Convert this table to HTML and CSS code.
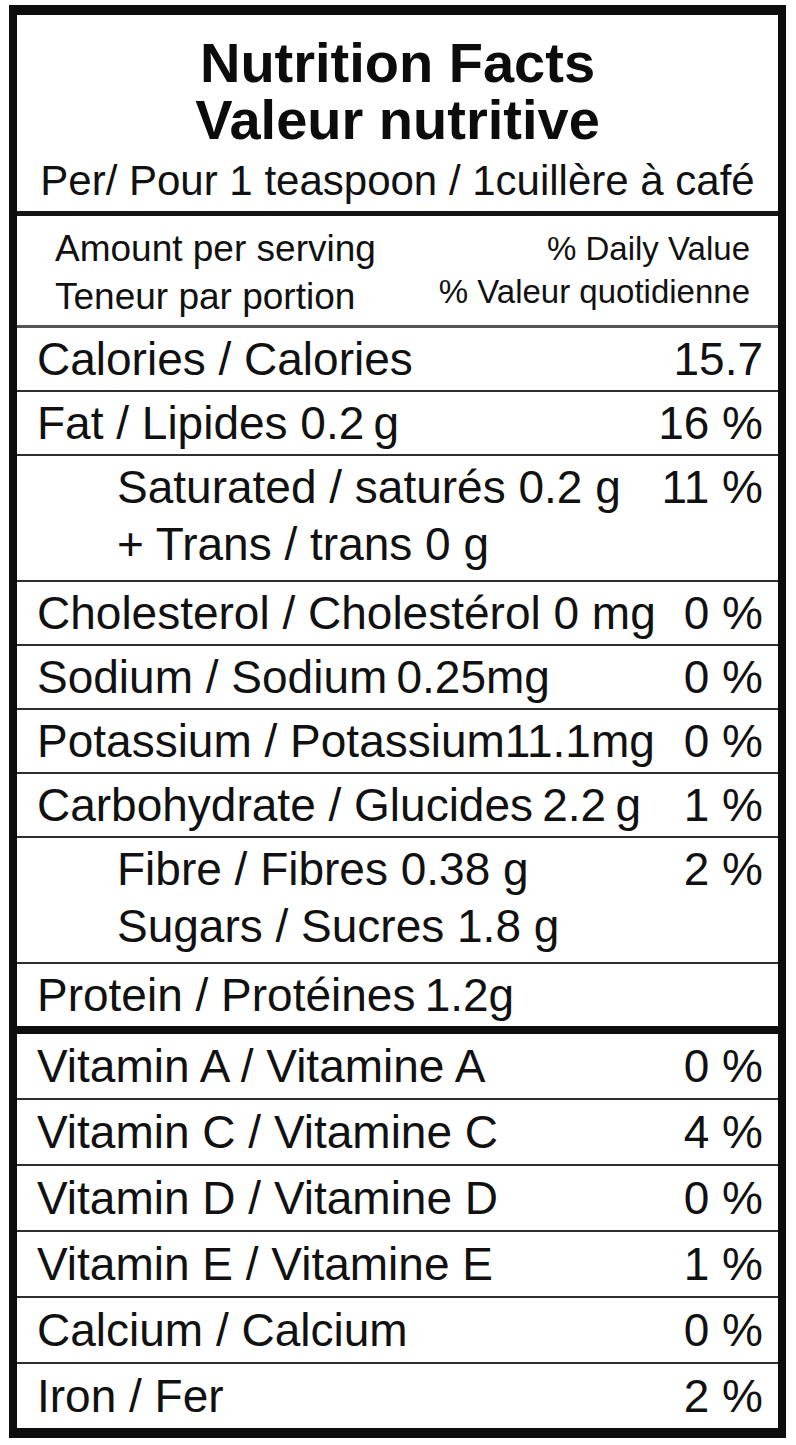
FILE: index.html
```html
<!DOCTYPE html>
<html lang="en">
<head>
<meta charset="utf-8">
<title>Nutrition Facts</title>
<link rel="stylesheet" href="styles.css">
</head>
<body>
<div class="label">
  <header class="head">
    <h1 class="title">Nutrition Facts<br>Valeur nutritive</h1>
    <p class="serving">Per/ Pour 1 teaspoon / 1cuillère à café</p>
  </header>
  <div class="amount">
    <div class="amount-left">Amount per serving<br>Teneur par portion</div>
    <div class="amount-right">% Daily Value<br>% Valeur quotidienne</div>
  </div>
  <div class="row"><span class="name">Calories / Calories</span><span class="val">15.7</span></div>
  <div class="row"><span class="name">Fat / Lipides 0.2&thinsp;g</span><span class="val">16 %</span></div>
  <div class="row double sub"><span class="name">Saturated / saturés 0.2 g<br>+ Trans / trans 0 g</span><span class="val">11 %</span></div>
  <div class="row"><span class="name">Cholesterol / Cholestérol 0 mg</span><span class="val">0 %</span></div>
  <div class="row"><span class="name">Sodium / Sodium&thinsp;0.25mg</span><span class="val">0 %</span></div>
  <div class="row"><span class="name">Potassium / Potassium11.1mg</span><span class="val">0 %</span></div>
  <div class="row"><span class="name">Carbohydrate / Glucides&thinsp;2.2&thinsp;g</span><span class="val">1 %</span></div>
  <div class="row double sub"><span class="name">Fibre / Fibres 0.38 g<br>Sugars / Sucres 1.8 g</span><span class="val">2 %</span></div>
  <div class="row thick"><span class="name">Protein / Protéines&thinsp;1.2g</span><span class="val"></span></div>
  <div class="row vit"><span class="name">Vitamin A / Vitamine A</span><span class="val">0 %</span></div>
  <div class="row vit"><span class="name">Vitamin C / Vitamine C</span><span class="val">4 %</span></div>
  <div class="row vit"><span class="name">Vitamin D / Vitamine D</span><span class="val">0 %</span></div>
  <div class="row vit"><span class="name">Vitamin E / Vitamine E</span><span class="val">1 %</span></div>
  <div class="row vit"><span class="name">Calcium / Calcium</span><span class="val">0 %</span></div>
  <div class="row vit last"><span class="name">Iron / Fer</span><span class="val">2 %</span></div>
</div>
</body>
</html>
```

FILE: styles.css
```css
html, body {
  margin: 0;
  padding: 0;
  background: #ffffff;
}
body {
  font-family: "Liberation Sans", Arial, sans-serif;
  color: #111111;
}
.label {
  box-sizing: border-box;
  width: 777px;
  margin: 5px 0 0 9px;
  border-style: solid;
  border-color: #0d0d0d;
  border-width: 10px 8px;
  background: #ffffff;
}
.head {
  box-sizing: border-box;
  height: 201px;
  padding: 19px 0 0;
  border-bottom: 5px solid #161616;
  text-align: center;
}
.title {
  margin: 0;
  font-size: 56px;
  line-height: 57px;
  font-weight: 700;
  color: #0c0c0c;
}
.serving {
  margin: 10px 0 0;
  font-size: 42px;
  line-height: 46px;
}
.amount {
  box-sizing: border-box;
  height: 112px;
  display: flex;
  justify-content: space-between;
  align-items: flex-start;
  padding: 9px 28px 0 38px;
  border-bottom: 3px solid #555555;
}
.amount-left {
  font-size: 37px;
  line-height: 48px;
}
.amount-right {
  margin-top: 2px;
  font-size: 33px;
  line-height: 43px;
  text-align: right;
}
.row {
  display: flex;
  justify-content: space-between;
  align-items: flex-start;
  padding: 0 15px 0 20px;
  font-size: 46px;
  line-height: 62px;
  height: 62px;
  border-bottom: 2px solid #2e2e2e;
  white-space: nowrap;
}
.row.sub {
  padding-left: 100px;
}
.row.double {
  box-sizing: border-box;
  height: 126px;
  padding-top: 3px;
  line-height: 57px;
}
.row.thick {
  border-bottom: 8px solid #0d0d0d;
}
.row.vit {
  line-height: 64px;
  height: 64px;
}
.row.last {
  border-bottom: none;
}
.val {
  text-align: right;
}
```
